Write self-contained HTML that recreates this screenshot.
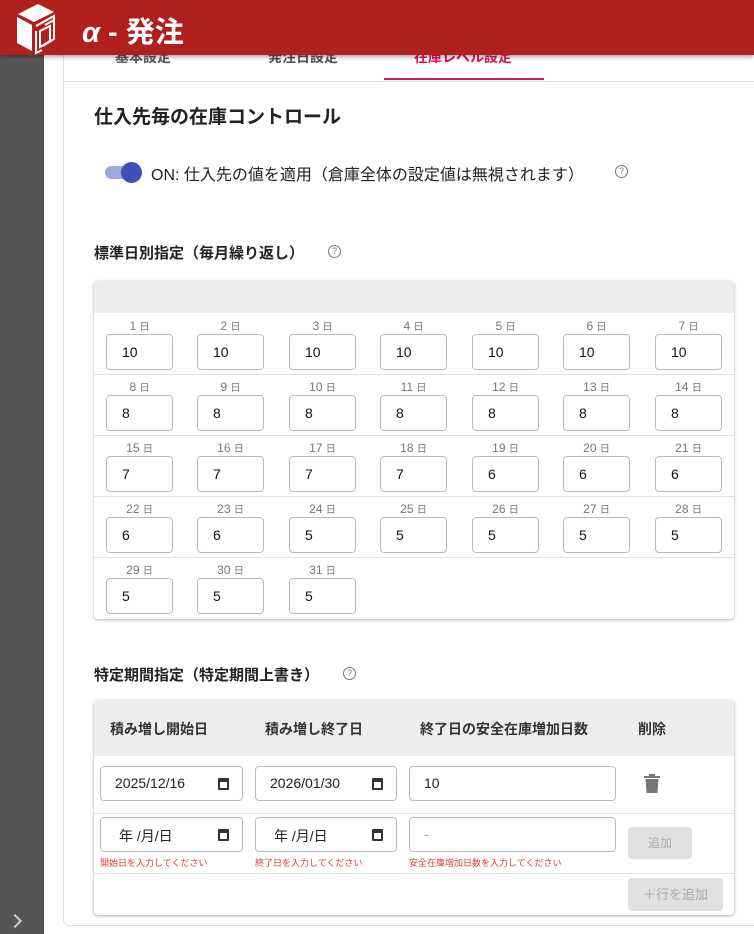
<!DOCTYPE html>
<html><head><meta charset="utf-8"><style>
*{box-sizing:border-box;margin:0;padding:0}
body{width:754px;height:934px;overflow:hidden;background:#fff;font-family:"Liberation Sans","Noto Sans CJK JP",sans-serif;position:relative;color:#222}
.a{position:absolute}
.hdr{left:0;top:0;width:754px;height:55px;background:#b0201c;z-index:5;box-shadow:0 2px 4px rgba(0,0,0,.35)}
.side{left:0;top:55px;width:44px;height:879px;background:#555}
.card{left:63px;top:40px;width:720px;height:886px;border:1px solid #ddd;border-radius:6px}
.tab{top:47px;font-size:14px;font-weight:bold;color:#555}
.lbl{font-size:12px;color:#777;text-align:center;width:67px}
.lbl small{font-size:10px}
.in{width:67px;height:36px;border:1px solid #bbb;border-radius:4px;font-size:14px;padding:9px 0 0 15px;color:#111}
.hl{height:1px;background:#e0e0e0}
.di{height:35px;border:1px solid #bbb;border-radius:4px;font-size:14px;padding:8px 0 0 14px;color:#222}
.cal{position:absolute;right:13px;top:11px;width:11px;height:12px;border:2px solid #333;border-top-width:4px;border-radius:1px}
.err{font-size:9px;color:#e53935}
.th{top:719px;font-size:14px;font-weight:bold;color:#333}
.q{width:13px;height:13px;border:1px solid #777;border-radius:50%;font-size:9px;color:#777;text-align:center;line-height:11px}
</style></head><body>
<div class="a side"></div>
<div class="a" style="left:10px;top:916px;width:10px;height:10px;border-right:2px solid #ccc;border-top:2px solid #ccc;transform:rotate(45deg)"></div>
<div class="a card"></div>
<div class="a tab" style="left:115px">基本設定</div>
<div class="a tab" style="left:268px">発注日設定</div>
<div class="a tab" style="left:414px;color:#e0115f">在庫レベル設定</div>
<div class="a" style="left:384px;top:78px;width:160px;height:2px;background:#e0115f"></div>
<div class="a hl" style="left:64px;top:81px;width:690px"></div>
<div class="a hdr">
<svg class="a" style="left:12px;top:1px" width="54" height="54" viewBox="0 0 54 54"><path d="M6 13 L26 3 L42 11 L22 21 Z" fill="#fff"/><path d="M5 16 L20 24 L20 50 L5 42 Z" fill="#fff"/><path d="M24 25 L42 15 L42 38 L31 45" fill="none" stroke="#fff" stroke-width="2"/><path d="M33 24 L42 19 M28 30 L38 25 L38 40 L28 46 Z" fill="none" stroke="#fff" stroke-width="2"/><path d="M24 30 V52 L30 49" fill="none" stroke="#fff" stroke-width="2"/></svg>
<div class="a" style="left:82px;top:9px;font-size:29px;font-weight:bold;color:#fff;font-style:italic">α<span style="font-style:normal"> - 発注</span></div>
</div>
<div class="a" style="left:94px;top:102px;font-size:19px;font-weight:bold;color:#222">仕入先毎の在庫コントロール</div>
<div class="a" style="left:105px;top:166px;width:34px;height:13px;border-radius:7px;background:#9fa8da"></div>
<div class="a" style="left:121px;top:162px;width:21px;height:21px;border-radius:50%;background:#3f51b5"></div>
<div class="a" style="left:151px;top:161px;font-size:16px;color:#222">ON: 仕入先の値を適用（倉庫全体の設定値は無視されます）</div>
<div class="a q" style="left:615px;top:165px">?</div>
<div class="a" style="left:94px;top:242px;font-size:15px;font-weight:bold;color:#222">標準日別指定（毎月繰り返し）</div>
<div class="a q" style="left:328px;top:245px">?</div>
<div class="a" style="left:94px;top:281px;width:640px;height:338px;border-radius:4px;box-shadow:0 1px 3px rgba(0,0,0,.3);background:#fff"></div>
<div class="a" style="left:94px;top:281px;width:640px;height:32px;background:#eee;border-radius:4px 4px 0 0"></div>
<div class="a hl" style="left:94px;top:374px;width:640px"></div>
<div class="a hl" style="left:94px;top:435px;width:640px"></div>
<div class="a hl" style="left:94px;top:496px;width:640px"></div>
<div class="a hl" style="left:94px;top:557px;width:640px"></div>

<div class="a lbl" style="left:106px;top:318px">1 <small>日</small></div><div class="a in" style="left:106px;top:334px">10</div>
<div class="a lbl" style="left:197px;top:318px">2 <small>日</small></div><div class="a in" style="left:197px;top:334px">10</div>
<div class="a lbl" style="left:289px;top:318px">3 <small>日</small></div><div class="a in" style="left:289px;top:334px">10</div>
<div class="a lbl" style="left:380px;top:318px">4 <small>日</small></div><div class="a in" style="left:380px;top:334px">10</div>
<div class="a lbl" style="left:472px;top:318px">5 <small>日</small></div><div class="a in" style="left:472px;top:334px">10</div>
<div class="a lbl" style="left:563px;top:318px">6 <small>日</small></div><div class="a in" style="left:563px;top:334px">10</div>
<div class="a lbl" style="left:655px;top:318px">7 <small>日</small></div><div class="a in" style="left:655px;top:334px">10</div>

<div class="a lbl" style="left:106px;top:379px">8 <small>日</small></div><div class="a in" style="left:106px;top:395px">8</div>
<div class="a lbl" style="left:197px;top:379px">9 <small>日</small></div><div class="a in" style="left:197px;top:395px">8</div>
<div class="a lbl" style="left:289px;top:379px">10 <small>日</small></div><div class="a in" style="left:289px;top:395px">8</div>
<div class="a lbl" style="left:380px;top:379px">11 <small>日</small></div><div class="a in" style="left:380px;top:395px">8</div>
<div class="a lbl" style="left:472px;top:379px">12 <small>日</small></div><div class="a in" style="left:472px;top:395px">8</div>
<div class="a lbl" style="left:563px;top:379px">13 <small>日</small></div><div class="a in" style="left:563px;top:395px">8</div>
<div class="a lbl" style="left:655px;top:379px">14 <small>日</small></div><div class="a in" style="left:655px;top:395px">8</div>

<div class="a lbl" style="left:106px;top:440px">15 <small>日</small></div><div class="a in" style="left:106px;top:456px">7</div>
<div class="a lbl" style="left:197px;top:440px">16 <small>日</small></div><div class="a in" style="left:197px;top:456px">7</div>
<div class="a lbl" style="left:289px;top:440px">17 <small>日</small></div><div class="a in" style="left:289px;top:456px">7</div>
<div class="a lbl" style="left:380px;top:440px">18 <small>日</small></div><div class="a in" style="left:380px;top:456px">7</div>
<div class="a lbl" style="left:472px;top:440px">19 <small>日</small></div><div class="a in" style="left:472px;top:456px">6</div>
<div class="a lbl" style="left:563px;top:440px">20 <small>日</small></div><div class="a in" style="left:563px;top:456px">6</div>
<div class="a lbl" style="left:655px;top:440px">21 <small>日</small></div><div class="a in" style="left:655px;top:456px">6</div>

<div class="a lbl" style="left:106px;top:501px">22 <small>日</small></div><div class="a in" style="left:106px;top:517px">6</div>
<div class="a lbl" style="left:197px;top:501px">23 <small>日</small></div><div class="a in" style="left:197px;top:517px">6</div>
<div class="a lbl" style="left:289px;top:501px">24 <small>日</small></div><div class="a in" style="left:289px;top:517px">5</div>
<div class="a lbl" style="left:380px;top:501px">25 <small>日</small></div><div class="a in" style="left:380px;top:517px">5</div>
<div class="a lbl" style="left:472px;top:501px">26 <small>日</small></div><div class="a in" style="left:472px;top:517px">5</div>
<div class="a lbl" style="left:563px;top:501px">27 <small>日</small></div><div class="a in" style="left:563px;top:517px">5</div>
<div class="a lbl" style="left:655px;top:501px">28 <small>日</small></div><div class="a in" style="left:655px;top:517px">5</div>

<div class="a lbl" style="left:106px;top:562px">29 <small>日</small></div><div class="a in" style="left:106px;top:578px">5</div>
<div class="a lbl" style="left:197px;top:562px">30 <small>日</small></div><div class="a in" style="left:197px;top:578px">5</div>
<div class="a lbl" style="left:289px;top:562px">31 <small>日</small></div><div class="a in" style="left:289px;top:578px">5</div>

<div class="a" style="left:94px;top:664px;font-size:15px;font-weight:bold;color:#222">特定期間指定（特定期間上書き）</div>
<div class="a q" style="left:343px;top:667px">?</div>
<div class="a" style="left:94px;top:700px;width:640px;height:215px;border-radius:4px;box-shadow:0 1px 3px rgba(0,0,0,.35);background:#fff"></div>
<div class="a" style="left:94px;top:700px;width:640px;height:56px;background:#ededed;border-radius:4px 4px 0 0"></div>
<div class="a th" style="left:110px">積み増し開始日</div>
<div class="a th" style="left:265px">積み増し終了日</div>
<div class="a th" style="left:420px">終了日の安全在庫増加日数</div>
<div class="a th" style="left:638px">削除</div>
<div class="a hl" style="left:94px;top:813px;width:640px"></div>
<div class="a hl" style="left:94px;top:873px;width:640px"></div>

<div class="a di" style="left:100px;top:766px;width:143px">2025/12/16<span class="cal"></span></div>
<div class="a di" style="left:255px;top:766px;width:142px">2026/01/30<span class="cal"></span></div>
<div class="a di" style="left:409px;top:766px;width:207px">10</div>
<svg class="a" style="left:644px;top:774px" width="16" height="20" viewBox="0 0 16 20"><rect x="0" y="2" width="16" height="2" fill="#777"/><rect x="5" y="0" width="6" height="3" fill="#777"/><path d="M1.5 5 H14.5 L13.5 19 H2.5 Z" fill="#777"/></svg>

<div class="a di" style="left:100px;top:817px;width:143px;padding-left:18px">年 /月/日<span class="cal"></span></div>
<div class="a di" style="left:255px;top:817px;width:142px;padding-left:18px">年 /月/日<span class="cal"></span></div>
<div class="a di" style="left:409px;top:817px;width:207px;color:#999">-</div>
<div class="a err" style="left:100px;top:856px">開始日を入力してください</div>
<div class="a err" style="left:255px;top:856px">終了日を入力してください</div>
<div class="a err" style="left:409px;top:856px">安全在庫増加日数を入力してください</div>
<div class="a" style="left:628px;top:827px;width:64px;height:32px;background:#e0e0e0;border-radius:4px;color:#aaa;font-size:12px;text-align:center;line-height:32px">追加</div>
<div class="a" style="left:628px;top:878px;width:95px;height:33px;background:#e0e0e0;border-radius:4px;color:#aaa;font-size:13px;text-align:center;line-height:33px">＋行を追加</div>
</body></html>
